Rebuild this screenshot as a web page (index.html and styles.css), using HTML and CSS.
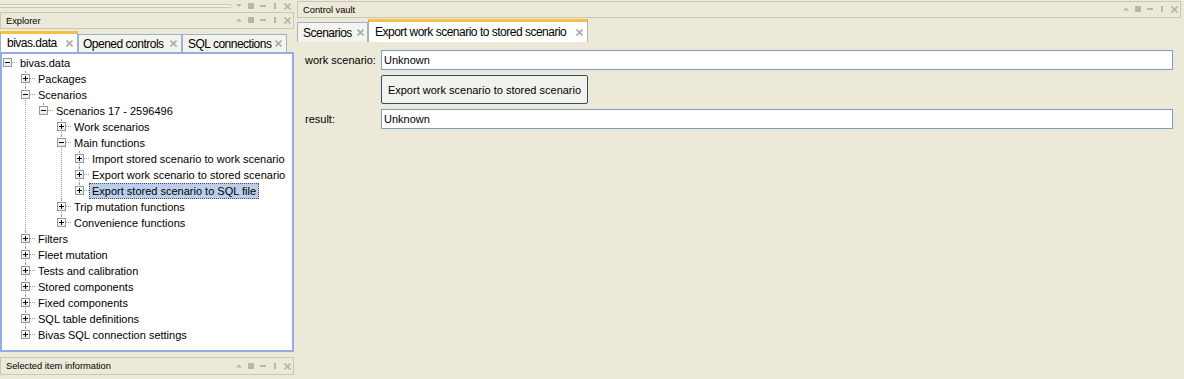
FILE: index.html
```html
<!DOCTYPE html>
<html>
<head>
<meta charset="utf-8">
<link rel="stylesheet" href="styles.css">
</head>
<body>
<div class="app">
  <div class="left">
    <div class="strip">
      <div class="track"></div>
      <svg class="hic" width="55" height="7" viewBox="0 0 55 7"><polygon points="0,1 6,1 3,4"/><rect x="12" y="0" width="6" height="6"/><rect x="24" y="2" width="6" height="2"/><rect x="38" y="0" width="2" height="6"/><path class="xs" d="M48.5 0.5 L54.5 6.5 M54.5 0.5 L48.5 6.5"/></svg>
    </div>
    <div class="phead">
      <span class="ptitle">Explorer</span>
      <svg class="hic" width="55" height="7" viewBox="0 0 55 7"><polygon points="0,4.5 6,4.5 3,1.5"/><rect x="12" y="0" width="6" height="6"/><rect x="24" y="2" width="6" height="2"/><rect x="38" y="0" width="2" height="6"/><path class="xs" d="M48.5 0.5 L54.5 6.5 M54.5 0.5 L48.5 6.5"/></svg>
    </div>
    <div class="tabs tabs-left">
      <div class="tab active w-bivas"><span class="tl">bivas.data</span><svg class="tx" width="7" height="7" viewBox="0 0 7 7"><path d="M0.5 0.5 L6.5 6.5 M6.5 0.5 L0.5 6.5"/></svg></div>
      <div class="tab w-opened"><span class="tl">Opened controls</span><svg class="tx" width="7" height="7" viewBox="0 0 7 7"><path d="M0.5 0.5 L6.5 6.5 M6.5 0.5 L0.5 6.5"/></svg></div>
      <div class="tab w-sql"><span class="tl">SQL connections</span><svg class="tx" width="7" height="7" viewBox="0 0 7 7"><path d="M0.5 0.5 L6.5 6.5 M6.5 0.5 L0.5 6.5"/></svg></div>
    </div>
    <div class="treebox">
      <ul class="tree">
        <li class="root">
          <div class="row"><span class="exp"></span><span class="conn"></span><span class="label">bivas.data</span></div>
          <ul class="sub">
            <li class="node"><div class="row"><span class="exp plus"></span><span class="conn"></span><span class="label">Packages</span></div></li>
            <li class="node">
              <div class="row"><span class="exp"></span><span class="conn"></span><span class="label">Scenarios</span></div>
              <ul class="sub">
                <li class="node">
                  <div class="row"><span class="exp"></span><span class="conn"></span><span class="label">Scenarios 17 - 2596496</span></div>
                  <ul class="sub">
                    <li class="node"><div class="row"><span class="exp plus"></span><span class="conn"></span><span class="label">Work scenarios</span></div></li>
                    <li class="node">
                      <div class="row"><span class="exp"></span><span class="conn"></span><span class="label">Main functions</span></div>
                      <ul class="sub">
                        <li class="node"><div class="row"><span class="exp plus"></span><span class="conn"></span><span class="label">Import stored scenario to work scenario</span></div></li>
                        <li class="node"><div class="row"><span class="exp plus"></span><span class="conn"></span><span class="label">Export work scenario to stored scenario</span></div></li>
                        <li class="node"><div class="row"><span class="exp plus"></span><span class="conn"></span><span class="label sel">Export stored scenario to SQL file</span></div></li>
                      </ul>
                    </li>
                    <li class="node"><div class="row"><span class="exp plus"></span><span class="conn"></span><span class="label">Trip mutation functions</span></div></li>
                    <li class="node"><div class="row"><span class="exp plus"></span><span class="conn"></span><span class="label">Convenience functions</span></div></li>
                  </ul>
                </li>
              </ul>
            </li>
            <li class="node"><div class="row"><span class="exp plus"></span><span class="conn"></span><span class="label">Filters</span></div></li>
            <li class="node"><div class="row"><span class="exp plus"></span><span class="conn"></span><span class="label">Fleet mutation</span></div></li>
            <li class="node"><div class="row"><span class="exp plus"></span><span class="conn"></span><span class="label">Tests and calibration</span></div></li>
            <li class="node"><div class="row"><span class="exp plus"></span><span class="conn"></span><span class="label">Stored components</span></div></li>
            <li class="node"><div class="row"><span class="exp plus"></span><span class="conn"></span><span class="label">Fixed components</span></div></li>
            <li class="node"><div class="row"><span class="exp plus"></span><span class="conn"></span><span class="label">SQL table definitions</span></div></li>
            <li class="node"><div class="row"><span class="exp plus"></span><span class="conn"></span><span class="label">Bivas SQL connection settings</span></div></li>
          </ul>
        </li>
      </ul>
    </div>
    <div class="phead phead-bottom">
      <span class="ptitle">Selected item information</span>
      <svg class="hic" width="55" height="7" viewBox="0 0 55 7"><polygon points="0,4.5 6,4.5 3,1.5"/><rect x="12" y="0" width="6" height="6"/><rect x="24" y="2" width="6" height="2"/><rect x="38" y="0" width="2" height="6"/><path class="xs" d="M48.5 0.5 L54.5 6.5 M54.5 0.5 L48.5 6.5"/></svg>
    </div>
  </div>

  <div class="right">
    <div class="phead phead-right">
      <span class="ptitle">Control vault</span>
      <svg class="hic" width="55" height="7" viewBox="0 0 55 7"><polygon points="0,4.5 6,4.5 3,1.5"/><rect x="12" y="0" width="6" height="6"/><rect x="24" y="2" width="6" height="2"/><rect x="38" y="0" width="2" height="6"/><path class="xs" d="M48.5 0.5 L54.5 6.5 M54.5 0.5 L48.5 6.5"/></svg>
    </div>
    <div class="tabs tabs-right">
      <div class="tab w-scen"><span class="tl">Scenarios</span><svg class="tx" width="7" height="7" viewBox="0 0 7 7"><path d="M0.5 0.5 L6.5 6.5 M6.5 0.5 L0.5 6.5"/></svg></div>
      <div class="tab active w-export"><span class="tl">Export work scenario to stored scenario</span><svg class="tx" width="7" height="7" viewBox="0 0 7 7"><path d="M0.5 0.5 L6.5 6.5 M6.5 0.5 L0.5 6.5"/></svg></div>
    </div>
    <div class="form">
      <label class="flabel">work scenario:</label>
      <div class="field">Unknown</div>
      <span></span>
      <button class="btn" type="button">Export work scenario to stored scenario</button>
      <label class="flabel">result:</label>
      <div class="field">Unknown</div>
    </div>
  </div>
</div>
</body>
</html>
```

FILE: styles.css
```css
html, body {
  margin: 0;
  padding: 0;
}
body {
  background: #ECE9D8;
  font-family: "Liberation Sans", Arial, sans-serif;
  font-size: 11px;
  color: #000;
}
.app {
  display: flex;
  width: 1184px;
  height: 379px;
  overflow: hidden;
}

/* left column */
.left {
  width: 294px;
  flex: none;
  display: flex;
  flex-direction: column;
}
.strip {
  height: 10px;
  display: flex;
  align-items: flex-start;
  padding-right: 3px;
}
.track {
  width: 232px;
  height: 4px;
  margin-top: 4px;
  border: 1px solid #CBC7B7;
  border-left: none;
  border-radius: 0 3px 3px 0;
  background: #F1EFE6;
  box-sizing: border-box;
  margin-right: 4px;
}
.strip .hic {
  margin-top: 3px;
}

.hic {
  flex: none;
  fill: #B6B5AE;
}
.hic .xs {
  fill: none;
  stroke: #B6B5AE;
  stroke-width: 1.7;
}

.phead {
  box-sizing: border-box;
  height: 17px;
  margin-top: 2px;
  border: 1px solid #CBC7B7;
  display: flex;
  align-items: center;
  justify-content: space-between;
  padding: 0 2px 0 5px;
}
.phead-bottom {
  margin-top: 5px;
  height: 18px;
}
.phead-right {
  margin-top: 1px;
}
.ptitle {
  font-size: 9.3px;
  color: #000;
  white-space: nowrap;
}

/* tabs */
.tabs {
  display: flex;
  align-items: flex-end;
}
.tabs-left {
  margin-top: 2px;
  height: 21px;
}
.tabs-right {
  margin-top: 1px;
  height: 23px;
}
.tab {
  box-sizing: border-box;
  display: flex;
  align-items: center;
  justify-content: space-between;
  border: 1px solid #9DB2CB;
  border-bottom: none;
  background: #F4F3EE;
  padding: 0 4px 0 5px;
  font-size: 12px;
  letter-spacing: -0.5px;
  white-space: nowrap;
}
.tabs-left .tab { height: 18px; }
.tabs-right .tab { height: 20px; }
.tab.active {
  background: #fff;
  border-top: 3px solid #F8BF45;
}
.tabs-left .tab.active { height: 21px; }
.tabs-right .tab.active { height: 23px; }
.tab .tl {
  line-height: 14px;
}
.tx {
  flex: none;
  fill: none;
  stroke: #A9A9A9;
  stroke-width: 1.6;
}
.w-bivas { width: 78px; padding-left: 6px; }
.w-opened { width: 104px; padding-left: 4px; }
.w-sql { width: 105px; }
.w-scen { width: 71px; padding-right: 3px; }
.w-export { width: 220px; padding-left: 6px; }

/* tree */
.treebox {
  box-sizing: border-box;
  height: 300px;
  border: 2px solid #93ACE2;
  background: #fff;
  padding-top: 1px;
  overflow: hidden;
}
.tree, .sub {
  list-style: none;
  margin: 0;
  padding: 0;
}
.sub {
  margin-left: 18px;
}
.root, .node {
  position: relative;
}
.node::before {
  content: "";
  position: absolute;
  left: 5px;
  top: 0;
  bottom: 0;
  border-left: 1px dotted #9E9E9E;
}
.node:last-child::before {
  bottom: auto;
  height: 8px;
}
.row {
  display: flex;
  align-items: flex-start;
  height: 16px;
  padding-left: 1px;
}
.exp {
  position: relative;
  z-index: 1;
  flex: none;
  box-sizing: border-box;
  width: 9px;
  height: 9px;
  margin-top: 3px;
  border: 1px solid #8A9BAD;
  background: linear-gradient(#ffffff, #ECEAE3);
}
.exp::before {
  content: "";
  position: absolute;
  left: 1px;
  top: 3px;
  width: 5px;
  height: 1px;
  background: #000;
}
.exp.plus::after {
  content: "";
  position: absolute;
  left: 3px;
  top: 1px;
  width: 1px;
  height: 5px;
  background: #000;
}
.conn {
  flex: none;
  width: 5px;
  height: 0;
  margin-top: 7px;
  border-top: 1px dotted #9E9E9E;
}
.label {
  box-sizing: border-box;
  height: 16px;
  line-height: 14px;
  padding: 0 2px;
  border: 1px solid transparent;
  white-space: nowrap;
}
.label.sel {
  background: #BBCFEB;
  border: 1px dotted #505050;
}

/* right column */
.right {
  flex: 1;
  margin-left: 3px;
  margin-right: 3px;
  display: flex;
  flex-direction: column;
}
.form {
  display: grid;
  grid-template-columns: 76px 1fr;
  grid-template-rows: 20px 29px 20px;
  row-gap: 5px;
  padding: 8px 8px 0 8px;
  align-items: center;
}
.flabel {
  white-space: nowrap;
}
.field {
  box-sizing: border-box;
  height: 20px;
  border: 1px solid #7F9DB9;
  background: #fff;
  padding: 0 2px;
  line-height: 18px;
}
.btn {
  justify-self: start;
  box-sizing: border-box;
  width: 207px;
  height: 29px;
  border: 1px solid #2F4F70;
  border-radius: 2px;
  background: #F2F2ED;
  font-family: "Liberation Sans", Arial, sans-serif;
  font-size: 11px;
  color: #000;
  padding: 0;
}
```
